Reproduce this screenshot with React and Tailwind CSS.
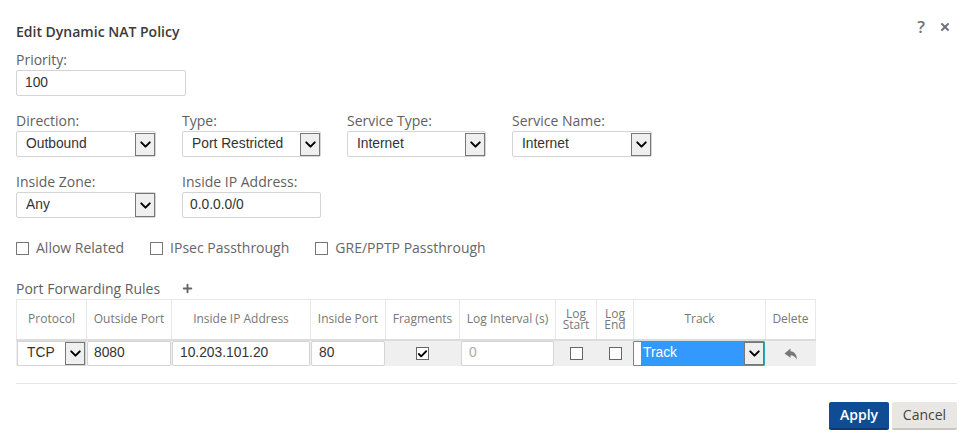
import React from 'react';
import { Plus, Check, X, ChevronDown } from 'lucide-react';

const Chevron = () => (
  <span className="flex h-full w-[20px] shrink-0 items-center justify-center border border-[#777] bg-[#efefef] text-black">
    <ChevronDown size={17} strokeWidth={2.8} />
  </span>
);

const Select = ({ value, className = '' }) => (
  <div className={`flex h-[26px] items-center rounded-[2px] border border-[#d4d4d4] bg-white font-['Liberation_Sans',sans-serif] text-[13.8px] text-[#333] ${className}`}>
    <span className="flex-1 pl-[9px]">{value}</span>
    <Chevron />
  </div>
);

const Input = ({ value, className = '' }) => (
  <div className={`flex h-[26px] items-center rounded-[2px] border border-[#d4d4d4] bg-white pl-[7px] font-['Liberation_Sans',sans-serif] text-[13.8px] text-[#333] ${className}`}>
    {value}
  </div>
);

const Field = ({ label, children, className = '' }) => (
  <div className={className}>
    <div className="h-[17px] text-[14px] leading-[15px] text-[#5f5f5f]">{label}</div>
    {children}
  </div>
);

const Box = ({ checked, className = '' }) => (
  <span className={`flex h-[13px] w-[13px] shrink-0 items-center justify-center border border-[#666] bg-white ${className}`}>
    {checked && <Check size={12} strokeWidth={4} className="text-black" />}
  </span>
);

const Cb = ({ label }) => (
  <div className="flex items-center gap-[7px]">
    <Box className="border-[#777]" />
    <span className="pb-[2px] text-[14px] text-[#666]">{label}</span>
  </div>
);

const headers = [
  ['Protocol'],
  ['Outside Port'],
  ['Inside IP Address'],
  ['Inside Port'],
  ['Fragments'],
  ['Log Interval (s)'],
  ['Log', 'Start'],
  ['Log', 'End'],
  ['Track'],
  ['Delete'],
];

const App = () => {
  return (
    <div className="relative h-[447px] w-[973px] overflow-hidden bg-white pl-[16px] pr-[16px] font-['Open_Sans',sans-serif]">
      {/* title bar */}
      <div className="flex h-[52px] items-start justify-between pt-[22px]">
        <h2 className="text-[14px] leading-[20px] font-semibold text-[#3a3a3a]">Edit Dynamic NAT Policy</h2>
        <div className="-mt-[5px] mr-[6px] flex items-center gap-[14px] text-[#6b7280]">
          <span className="text-[17px] leading-[20px] font-semibold">?</span>
          <X size={12} strokeWidth={4} />
        </div>
      </div>

      <Field label="Priority:">
        <Input value="100" className="mt-[1px] w-[170px] !pl-[8px]" />
      </Field>

      <div className="mt-[17px] flex gap-[26px]">
        <Field label="Direction:"><Select value="Outbound" className="mt-[1px] w-[140px] pt-px" /></Field>
        <Field label="Type:"><Select value="Port Restricted" className="mt-[1px] w-[139px] pt-px" /></Field>
        <Field label="Service Type:"><Select value="Internet" className="mt-[1px] w-[139px] pt-px" /></Field>
        <Field label="Service Name:"><Select value="Internet" className="mt-[1px] w-[140px] pt-px" /></Field>
      </div>

      <div className="mt-[17px] flex gap-[26px]">
        <Field label="Inside Zone:"><Select value="Any" className="mt-[1px] w-[140px]" /></Field>
        <Field label="Inside IP Address:"><Input value="0.0.0.0/0" className="mt-[1px] w-[139px]" /></Field>
      </div>

      <div className="mt-[20px] flex h-[20px] items-center gap-[26px]">
        <Cb label="Allow Related" />
        <Cb label="IPsec Passthrough" />
        <Cb label="GRE/PPTP Passthrough" />
      </div>

      <div className="mt-[20px] flex h-[20px] items-center gap-[21px]">
        <span className="text-[14px] text-[#5f5f5f]">Port Forwarding Rules</span>
        <Plus size={13} strokeWidth={3.5} className="text-[#666]" />
      </div>

      {/* rules table */}
      <div className="mt-[1px] w-[800px]">
        <div className="grid h-[40px] grid-cols-[70px_85px_139px_75px_74px_96px_41px_37px_132px_49px] border-x border-t border-[#e8e8e8]">
          {headers.map((h, i) => (
            <div
              key={h.join('')}
              className={`flex items-center justify-center pb-[2px] text-center text-[12px] text-[#777] ${i < 9 ? 'border-r border-[#e8e8e8]' : ''} ${h.length > 1 ? 'leading-[11px]' : ''}`}
            >
              <span>
                {h[0]}
                {h[1] && <br />}
                {h[1]}
              </span>
            </div>
          ))}
        </div>
        <div className="grid h-[27px] grid-cols-[69px_85px_139px_75px_74px_96px_41px_37px_132px_51px] border-t-2 border-[#dcdcdc] bg-[#efefef] pl-px">
          <div className="flex h-[25px] items-center border border-[#d4d4d4] bg-white pl-[9px] font-['Liberation_Sans',sans-serif] text-[13.8px] text-[#333]">
            <span className="flex-1">TCP</span>
            <Chevron />
          </div>
          <Input value="8080" className="ml-px !h-[25px] !pl-[6px]" />
          <Input value="10.203.101.20" className="ml-px !h-[25px]" />
          <Input value="80" className="ml-px !h-[25px]" />
          <div className="flex items-center justify-center"><Box checked className="border-[#444]" /></div>
          <Input value="0" className="ml-[2px] mr-px !h-[25px] !text-[#aaa]" />
          <div className="flex items-center justify-center pl-px"><Box className="border-[#555]" /></div>
          <div className="flex items-center justify-center pl-px"><Box className="border-[#555]" /></div>
          <div className="flex h-[25px] items-stretch rounded-[1px] border border-[#2aa5b5] bg-white pl-[7px] font-['Liberation_Sans',sans-serif] text-[13.8px]">
            <span className="flex-1 bg-[#3399ff] pl-[2px] leading-[21px] text-white">Track</span>
            <Chevron />
          </div>
          <div className="flex items-center justify-center text-[#777]">
            <svg width="14" height="12" viewBox="0 0 14 12" fill="currentColor">
              <path d="M6.5 0.5 L0.5 5.5 L6.5 9.8 V7.2 C9 7.2 10.8 8.5 12.8 11.5 C13 7 10.5 3.5 6.5 3.3 Z" />
            </svg>
          </div>
        </div>
      </div>

      <div className="mt-[17px] h-px w-[941px] bg-[#e5e5e5]" />

      <div className="mt-[18px] flex w-[941px] justify-end gap-[3px]">
        <button className="h-[28px] w-[60px] rounded-[2px] border-b-2 border-[#0a3a75] bg-[#0f4c94] pb-px text-[14px] font-semibold text-white">Apply</button>
        <button className="h-[28px] w-[65px] rounded-[2px] border-b-2 border-[#c9c6c0] bg-[#e9e7e3] pb-px text-[14px] text-[#444]">Cancel</button>
      </div>
    </div>
  );
};

export default App;
